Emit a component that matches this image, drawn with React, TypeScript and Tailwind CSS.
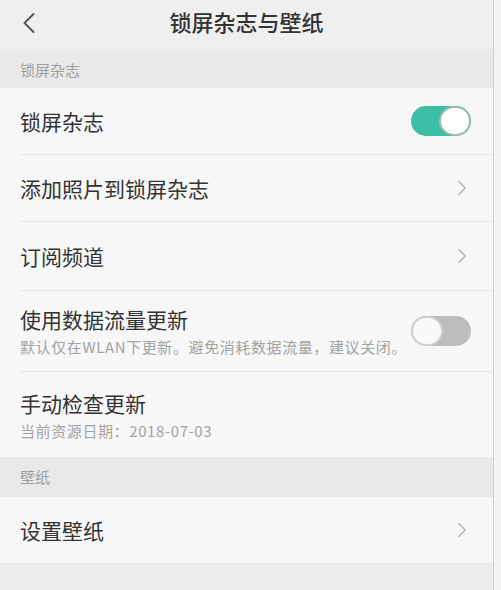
import { ChevronLeft, ChevronRight } from 'lucide-react';

const font = { fontFamily: '"Noto Sans CJK SC", "Noto Sans", sans-serif' };

function Toggle({ on }: { on: boolean }) {
    return on ? (
        <div className="w-[60px] h-[30px] rounded-full bg-[#3cbfa6] flex items-center justify-end">
            <div className="w-[32px] h-[30px] rounded-full bg-white border-2 border-[#9fb8b2]" />
        </div>
    ) : (
        <div className="w-[60px] h-[30px] rounded-full bg-[#bdbdbd] flex items-center justify-start">
            <div className="w-[32px] h-[30px] rounded-full bg-[#fafafa] border-2 border-[#d0d0d0]" />
        </div>
    );
}

function Row({ title, sub, right, h, divider = true }: { title: string; sub?: string; right?: React.ReactNode; h: string; divider?: boolean }) {
    return (
        <div className={`flex items-center pl-5 ${h}`}>
            <div className={`flex-1 h-full flex items-center pr-[22px] ${divider ? 'border-b border-[#e6e6e6]' : ''}`}>
                <div className="flex-1 flex flex-col">
                    <span className="text-[21px] leading-[28px] text-[#333]">{title}</span>
                    {sub && <span className="text-[15px] tracking-[0.6px] leading-[20px] text-[#a3a3a3] mt-[4px]">{sub}</span>}
                </div>
                {right}
            </div>
        </div>
    );
}

const chevron = <ChevronRight className="w-[26px] h-[26px] text-[#b4b4b4] -mr-[4px]" strokeWidth={1.3} />;

export default function App() {
    return (
        <div className="w-[501px] h-[590px] bg-[#f4f4f4] overflow-hidden" style={font}>
            <div className="w-[494px] h-full border-r border-[#cfcfcf] flex flex-col">
                <div className="h-[49px] bg-[#efefef] flex items-center relative pb-[6px]">
                    <ChevronLeft className="absolute left-[11px] top-[5px] w-[36px] h-[36px] text-[#555]" strokeWidth={1.3} />
                    <div className="flex-1 text-center text-[22px] text-[#333] font-medium">锁屏杂志与壁纸</div>
                </div>
                <div className="h-[39px] bg-[#e9e9e9] flex items-center pt-[4px] pl-5 text-[15px] text-[#a0a0a0]">锁屏杂志</div>
                <div className="bg-[#f7f7f7]">
                    <Row h="h-[67px]" title="锁屏杂志" right={<Toggle on />} />
                    <Row h="h-[67px]" title="添加照片到锁屏杂志" right={chevron} />
                    <Row h="h-[69px]" title="订阅频道" right={chevron} />
                    <Row h="h-[81px]" title="使用数据流量更新" sub="默认仅在WLAN下更新。避免消耗数据流量，建议关闭。" right={<Toggle on={false} />} />
                    <Row h="h-[85px]" title="手动检查更新" sub="当前资源日期：2018-07-03" divider={false} />
                </div>
                <div className="h-[40px] bg-[#e9e9e9] flex items-center pl-5 text-[15px] text-[#a0a0a0]">壁纸</div>
                <div className="bg-[#f7f7f7]">
                    <Row h="h-[66px]" title="设置壁纸" right={chevron} divider={false} />
                </div>
                <div className="flex-1 bg-[#ececec]" />
            </div>
        </div>
    );
}
